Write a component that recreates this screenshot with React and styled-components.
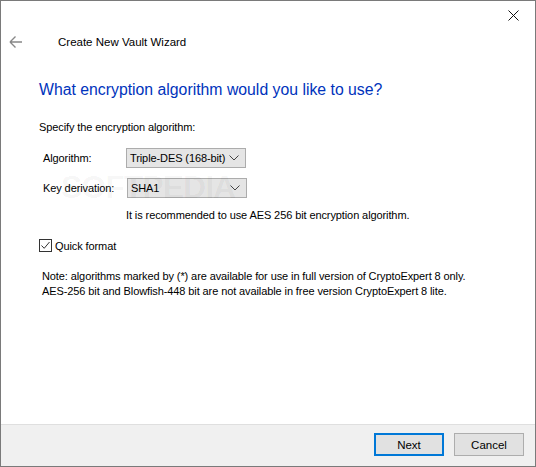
import React from "react"
import styled, { createGlobalStyle } from "styled-components"

const Global = createGlobalStyle`
  html, body {
    margin: 0;
    padding: 0;
    background: #ffffff;
  }
  body {
    font-family: "Liberation Sans", Arial, sans-serif;
    font-size: 11px;
    letter-spacing: -0.1px;
    color: #000000;
  }
`

const Window = styled.div`
  position: relative;
  box-sizing: border-box;
  width: 536px;
  height: 467px;
  border: 1px solid #7a7a7a;
  display: flex;
  flex-direction: column;
  background: #ffffff;
`

const TopBar = styled.div`
  height: 29px;
  display: flex;
  justify-content: flex-end;
  align-items: flex-start;
`

const CloseBtn = styled.div`
  width: 46px;
  height: 29px;
  display: flex;
  align-items: center;
  justify-content: center;
  margin-right: -1px;
`

const Header = styled.div`
  display: flex;
  align-items: center;
  height: 24px;
  padding-left: 8px;
`

const BackArrow = styled.div`
  width: 14px;
  height: 14px;
  display: flex;
  margin-right: 35px;
`

const Title = styled.div`
  font-size: 11.5px;
  letter-spacing: 0;
  color: #000;
`

const Body = styled.div`
  flex: 1;
  padding: 26px 0 0 38px;
  display: flex;
  flex-direction: column;
`

const Heading = styled.h1`
  margin: 0;
  font-family: "Liberation Sans", Arial, sans-serif;
  font-weight: normal;
  font-size: 15.8px;
  letter-spacing: 0;
  color: #0033bc;
  line-height: 20px;
`

const Text = styled.div`
  line-height: ${(p) => p.$lh || "15px"};
  margin-top: ${(p) => p.$mt || "0"};
  margin-left: ${(p) => p.$ml || "0"};
  white-space: nowrap;
`

const FormGrid = styled.div`
  display: grid;
  grid-template-columns: 83px auto;
  row-gap: 10px;
  align-items: center;
  margin-top: 13px;
  margin-left: 4px;
`

const Label = styled.div`
  white-space: nowrap;
`

const Select = styled.div`
  box-sizing: border-box;
  width: 120px;
  height: 20px;
  margin-left: ${(p) => p.$shift || "0"};
  display: flex;
  align-items: center;
  justify-content: space-between;
  padding: 0 6px 0 3px;
  background: #e5e5e5;
  border: 1px solid #acacac;
  white-space: nowrap;
`

const CheckRow = styled.label`
  display: flex;
  align-items: center;
  margin-top: 16px;
`

const Box = styled.span`
  box-sizing: border-box;
  width: 13px;
  height: 13px;
  border: 1px solid #333;
  background: #fff;
  display: flex;
  align-items: center;
  justify-content: center;
  margin-right: 3px;
`

const Footer = styled.div`
  height: 41px;
  border-top: 1px solid #dfdfdf;
  background: #f0f0f0;
  display: flex;
  align-items: center;
  justify-content: flex-end;
  gap: 10px;
  padding-right: 11px;
`

const Button = styled.div`
  box-sizing: border-box;
  width: 70px;
  height: 23px;
  display: flex;
  align-items: center;
  justify-content: center;
  background: #e1e1e1;
  border: ${(p) => (p.$primary ? "2px solid #0078d7" : "1px solid #adadad")};
  font-size: 11.5px;
  letter-spacing: 0;
  margin-top: -2px;
`

const Watermark = styled.div`
  position: absolute;
  left: 60px;
  top: 168px;
  font-family: "Liberation Sans", Arial, sans-serif;
  font-weight: bold;
  font-size: 32px;
  letter-spacing: -1px;
  color: rgba(0, 0, 0, 0.045);
  pointer-events: none;
`

const Chevron = () => (
  <svg width="10" height="6" viewBox="0 0 10 6">
    <path d="M0.5 0.5 L5 5 L9.5 0.5" fill="none" stroke="#444" strokeWidth="1" />
  </svg>
)

export default function App() {
  return (
    <>
      <Global />
      <Window>
        <TopBar>
          <CloseBtn>
            <svg width="11" height="11" viewBox="0 0 11 11">
              <path d="M0.5 0.5 L10.5 10.5 M10.5 0.5 L0.5 10.5" stroke="#111" strokeWidth="1" />
            </svg>
          </CloseBtn>
        </TopBar>
        <Header>
          <BackArrow>
            <svg width="14" height="14" viewBox="0 0 14 14">
              <path d="M1 7 H13 M1 7 L6.5 1.5 M1 7 L6.5 12.5" fill="none" stroke="#888" strokeWidth="1.4" />
            </svg>
          </BackArrow>
          <Title>Create New Vault Wizard</Title>
        </Header>
        <Body>
          <Heading>What encryption algorithm would you like to use?</Heading>
          <Text $mt="20px">Specify the encryption algorithm:</Text>
          <FormGrid>
            <Label>Algorithm:</Label>
            <Select>
              <span>Triple-DES (168-bit)</span>
              <Chevron />
            </Select>
            <Label>Key derivation:</Label>
            <Select $shift="1px">
              <span>SHA1</span>
              <Chevron />
            </Select>
          </FormGrid>
          <Text $mt="10px" $ml="87px">It is recommended to use AES 256 bit encryption algorithm.</Text>
          <CheckRow>
            <Box>
              <svg width="11" height="11" viewBox="0 0 11 11">
                <path d="M1.5 5.5 L4.2 8.3 L9.5 2" fill="none" stroke="#333" strokeWidth="1" />
              </svg>
            </Box>
            Quick format
          </CheckRow>
          <Text $mt="17px" $ml="3px">
            Note: algorithms marked by (*) are available for use in full version of CryptoExpert 8 only.
            <br />
            AES-256 bit and Blowfish-448 bit are not available in free version CryptoExpert 8 lite.
          </Text>
        </Body>
        <Footer>
          <Button $primary>Next</Button>
          <Button>Cancel</Button>
        </Footer>
        <Watermark>SOFTPEDIA</Watermark>
      </Window>
    </>
  )
}
